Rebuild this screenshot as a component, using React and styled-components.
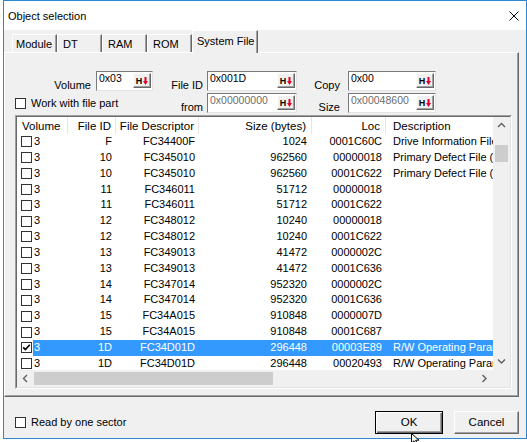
import React from 'react';
import styled, { createGlobalStyle } from 'styled-components';

const GlobalStyle = createGlobalStyle`
  html, body {
    margin: 0;
    padding: 0;
    background: #ffffff;
  }
  body {
    font-family: "Liberation Sans", Arial, sans-serif;
    font-size: 11px;
    color: #000000;
  }
`;

const Screen = styled.div`
  position: relative;
  width: 527px;
  height: 442px;
  overflow: hidden;
`;

const Dialog = styled.div`
  box-sizing: border-box;
  width: 524px;
  height: 439px;
  margin-left: 3px;
  border: 1px solid #2b87d3;
  background: #f0f0f0;
  display: flex;
  flex-direction: column;
`;

const TitleBar = styled.div`
  height: 29px;
  flex: none;
  background: #ffffff;
  display: flex;
  align-items: center;
  justify-content: space-between;
  padding: 0 7px 0 4px;
  font-size: 11px;
`;

const TabStrip = styled.div`
  position: relative;
  z-index: 1;
  height: 22px;
  flex: none;
  display: flex;
  align-items: flex-end;
  padding-left: 8px;
`;

const Tab = styled.div`
  box-sizing: border-box;
  width: ${(p) => p.$width}px;
  height: ${(p) => (p.$active ? 23 : 18)}px;
  margin-bottom: ${(p) => (p.$active ? -1 : 0)}px;
  padding-left: ${(p) => p.$pad}px;
  padding-bottom: ${(p) => (p.$active ? 2 : 0)}px;
  display: flex;
  align-items: center;
  background: #f0f0f0;
  border-top: 1px solid #ffffff;
  border-left: 1px solid #ffffff;
  border-right: 1px solid #696969;
  box-shadow: inset -1px 0 0 #a0a0a0;
  font-size: 11px;
  white-space: nowrap;
`;

const TabPanel = styled.div`
  box-sizing: border-box;
  width: 515px;
  height: 345px;
  flex: none;
  border: 1px solid;
  border-color: #ffffff #696969 #696969 #ffffff;
  box-shadow: inset -1px -1px 0 #a0a0a0;
  padding: 18px 0 0 10px;
  display: flex;
  flex-direction: column;
  gap: 2px;
`;

const FieldRow = styled.div`
  display: flex;
  align-items: flex-end;
  height: 20px;
`;

const Label = styled.div`
  box-sizing: border-box;
  width: ${(p) => p.$width}px;
  padding-right: ${(p) => p.$pad}px;
  text-align: right;
  line-height: 12px;
  white-space: nowrap;
`;

const Edit = styled.div`
  box-sizing: border-box;
  width: ${(p) => p.$width}px;
  height: 20px;
  background: #ffffff;
  border: 1px solid;
  border-color: #7a7a7a #e3e3e3 #e3e3e3 #7a7a7a;
  padding: 0 1px 0 2px;
  display: flex;
  justify-content: space-between;
  font-size: 10.5px;
  color: ${(p) => (p.$disabled ? '#6d6d6d' : '#000000')};
`;

const EditText = styled.span`
  line-height: 11px;
  margin-top: 1px;
`;

const HexButton = styled.div`
  box-sizing: border-box;
  width: 18px;
  height: 15px;
  margin-top: 1px;
  background: #f0f0f0;
  border: 1px solid;
  border-color: #ffffff #696969 #696969 #ffffff;
  box-shadow: inset -1px -1px 0 #a0a0a0;
  display: flex;
  align-items: center;
  justify-content: center;
  gap: 1px;
  font-size: 9px;
  font-weight: bold;
  color: #000000;
`;

const CheckLine = styled.label`
  box-sizing: border-box;
  width: ${(p) => (p.$width ? `${p.$width}px` : 'auto')};
  display: flex;
  align-items: center;
  gap: 5px;
  height: 20px;
  white-space: nowrap;
`;

const Box = styled.span`
  box-sizing: border-box;
  width: 11px;
  height: 11px;
  flex: none;
  border: 1px solid #333333;
  background: #ffffff;
  display: inline-flex;
  align-items: center;
  justify-content: center;
`;

const ListFrame = styled.div`
  box-sizing: border-box;
  width: 497px;
  height: 274px;
  border: 1px solid;
  border-color: #a0a0a0 #ffffff #ffffff #a0a0a0;
`;

const ListInner = styled.div`
  box-sizing: border-box;
  height: 100%;
  border: 1px solid;
  border-color: #696969 #e3e3e3 #e3e3e3 #696969;
  background: #ffffff;
  display: grid;
  grid-template-columns: 476px 17px;
  grid-template-rows: 253px 17px;
`;

const ListBody = styled.div`
  overflow: hidden;
`;

const HeaderRow = styled.div`
  display: grid;
  grid-template-columns: 51px 48px 83px 113px 74px 160px;
  height: 17px;
  background: #ffffff;
`;

const HeaderCell = styled.div`
  box-sizing: border-box;
  display: flex;
  align-items: center;
  justify-content: ${(p) => (p.$right ? 'flex-end' : 'flex-start')};
  padding: ${(p) => (p.$right ? `0 ${p.$pad}px 0 0` : `0 0 0 ${p.$pad}px`)};
  border-right: 1px solid #e5e5e5;
  font-size: 11.5px;
  white-space: nowrap;
`;

const Row = styled.div`
  display: grid;
  grid-template-columns: 16px 35px 48px 83px 113px 74px 160px;
  height: 15.85px;
  line-height: 15.85px;
`;

const CheckCell = styled.div`
  display: flex;
  align-items: center;
  padding-left: 4px;
`;

const Cell = styled.div`
  box-sizing: border-box;
  white-space: nowrap;
  overflow: hidden;
  text-align: ${(p) => (p.$right ? 'right' : 'left')};
  padding: ${(p) => (p.$right ? `0 ${p.$pad}px 0 0` : `0 0 0 ${p.$pad}px`)};
  background: ${(p) => (p.$selected ? '#3399ff' : 'transparent')};
  color: ${(p) => (p.$selected ? '#ffffff' : '#000000')};
`;

const VScroll = styled.div`
  background: #f0f0f0;
  display: flex;
  flex-direction: column;
`;

const HScroll = styled.div`
  background: #f0f0f0;
  display: flex;
`;

const Corner = styled.div`
  background: #f0f0f0;
`;

const Arrow = styled.div`
  width: 17px;
  height: 17px;
  flex: none;
  display: flex;
  align-items: center;
  justify-content: center;
`;

const VTrack = styled.div`
  flex: 1;
  display: flex;
  flex-direction: column;
  align-items: center;
`;

const VThumb = styled.div`
  width: 13px;
  height: 17px;
  margin-top: 11px;
  background: #cdcdcd;
`;

const HTrack = styled.div`
  flex: 1;
  display: flex;
  align-items: center;
`;

const HThumb = styled.div`
  width: 239px;
  height: 13px;
  background: #cdcdcd;
`;

const Footer = styled.div`
  flex: 1;
  display: flex;
  align-items: center;
  padding: 9px 7px 0 11px;
`;

const ButtonGroup = styled.div`
  margin-left: auto;
  display: flex;
  gap: 11px;
`;

const Button = styled.button`
  box-sizing: border-box;
  width: ${(p) => p.$width}px;
  height: 23px;
  padding: 0;
  font-family: inherit;
  font-size: 11.5px;
  color: #000000;
  background: #f0f0f0;
  border: 1px solid;
  border-color: ${(p) => (p.$default ? '#000000' : '#ffffff #696969 #696969 #ffffff')};
  box-shadow: ${(p) =>
    p.$default
      ? 'inset 1px 1px 0 #ffffff, inset -1px -1px 0 #696969, inset -2px -2px 0 #a0a0a0'
      : 'inset -1px -1px 0 #a0a0a0'};
`;

const Cursor = styled.svg`
  position: absolute;
  left: 411px;
  top: 433px;
`;

const rows = [
  ['3', 'F', 'FC34400F', '1024', '0001C60C', 'Drive Information File'],
  ['3', '10', 'FC345010', '962560', '00000018', 'Primary Defect File (P-List)'],
  ['3', '10', 'FC345010', '962560', '0001C622', 'Primary Defect File (P-List)'],
  ['3', '11', 'FC346011', '51712', '00000018', ''],
  ['3', '11', 'FC346011', '51712', '0001C622', ''],
  ['3', '12', 'FC348012', '10240', '00000018', ''],
  ['3', '12', 'FC348012', '10240', '0001C622', ''],
  ['3', '13', 'FC349013', '41472', '0000002C', ''],
  ['3', '13', 'FC349013', '41472', '0001C636', ''],
  ['3', '14', 'FC347014', '952320', '0000002C', ''],
  ['3', '14', 'FC347014', '952320', '0001C636', ''],
  ['3', '15', 'FC34A015', '910848', '0000007D', ''],
  ['3', '15', 'FC34A015', '910848', '0001C687', ''],
  ['3', '1D', 'FC34D01D', '296448', '00003E89', 'R/W Operating Parameters', true],
  ['3', '1D', 'FC34D01D', '296448', '00020493', 'R/W Operating Parameters'],
];

const Chevron = ({ dir }) => {
  const pts = {
    up: '1,5 4.5,1.5 8,5',
    down: '1,1.5 4.5,5 8,1.5',
    left: '5,1 1.5,4.5 5,8',
    right: '1.5,1 5,4.5 1.5,8',
  }[dir];
  const vertical = dir === 'up' || dir === 'down';
  return (
    <svg width={vertical ? 9 : 7} height={vertical ? 7 : 9} viewBox={vertical ? '0 0 9 7' : '0 0 7 9'}>
      <polyline points={pts} fill="none" stroke="#606060" strokeWidth="1.4" />
    </svg>
  );
};

const Check = ({ checked }) => (
  <Box>
    {checked && (
      <svg width="9" height="9" viewBox="0 0 9 9">
        <polyline points="1.2,4.4 3.4,6.6 7.8,1.8" fill="none" stroke="#000" strokeWidth="1.7" />
      </svg>
    )}
  </Box>
);

const HexInput = ({ value, width, disabled }) => (
  <Edit $width={width} $disabled={disabled}>
    <EditText>{value}</EditText>
    <HexButton>
      H
      <svg width="5" height="8" viewBox="0 0 5 8">
        <rect x="1.5" y="0" width="2" height="4" fill="#e4002b" />
        <polygon points="0,4 5,4 2.5,8" fill="#e4002b" />
      </svg>
    </HexButton>
  </Edit>
);

const App = () => (
  <Screen>
    <GlobalStyle />
    <Dialog>
      <TitleBar>
        <span>Object selection</span>
        <svg width="10" height="10" viewBox="0 0 10 10">
          <path d="M0.5 0.5 L9.5 9.5 M9.5 0.5 L0.5 9.5" stroke="#000" strokeWidth="1" />
        </svg>
      </TitleBar>

      <TabStrip>
        <Tab $width={45} $pad={3}>Module</Tab>
        <Tab $width={45} $pad={5}>DT</Tab>
        <Tab $width={45} $pad={5}>RAM</Tab>
        <Tab $width={45} $pad={5}>ROM</Tab>
        <Tab $width={66} $pad={4} $active>System File</Tab>
      </TabStrip>

      <TabPanel>
        <FieldRow>
          <Label $width={81} $pad={5}>Volume</Label>
          <HexInput value="0x03" width={57} />
          <Label $width={54} $pad={4}>File ID</Label>
          <HexInput value="0x001D" width={90} />
          <Label $width={51} $pad={8}>Copy</Label>
          <HexInput value="0x00" width={88} />
        </FieldRow>
        <FieldRow>
          <CheckLine $width={138}>
            <Check />
            Work with file part
          </CheckLine>
          <Label $width={54} $pad={4}>from</Label>
          <HexInput value="0x00000000" width={90} disabled />
          <Label $width={51} $pad={8}>Size</Label>
          <HexInput value="0x00048600" width={88} disabled />
        </FieldRow>

        <ListFrame>
          <ListInner>
            <ListBody>
              <HeaderRow>
                <HeaderCell $pad={5}>Volume</HeaderCell>
                <HeaderCell $right $pad={4}>File ID</HeaderCell>
                <HeaderCell $right $pad={4}>File Descriptor</HeaderCell>
                <HeaderCell $right $pad={5}>Size (bytes)</HeaderCell>
                <HeaderCell $right $pad={5}>Loc</HeaderCell>
                <HeaderCell $pad={7}>Description</HeaderCell>
              </HeaderRow>
              {rows.map(([vol, id, desc, size, loc, text, sel], i) => (
                <Row key={i}>
                  <CheckCell>
                    <Check checked={sel} />
                  </CheckCell>
                  <Cell $pad={1} $selected={sel}>{vol}</Cell>
                  <Cell $right $pad={4} $selected={sel}>{id}</Cell>
                  <Cell $right $pad={4} $selected={sel}>{desc}</Cell>
                  <Cell $right $pad={5} $selected={sel}>{size}</Cell>
                  <Cell $right $pad={4} $selected={sel}>{loc}</Cell>
                  <Cell $pad={7} $selected={sel}>{text}</Cell>
                </Row>
              ))}
            </ListBody>
            <VScroll>
              <Arrow><Chevron dir="up" /></Arrow>
              <VTrack>
                <VThumb />
              </VTrack>
              <Arrow><Chevron dir="down" /></Arrow>
            </VScroll>
            <HScroll>
              <Arrow><Chevron dir="left" /></Arrow>
              <HTrack>
                <HThumb />
              </HTrack>
              <Arrow><Chevron dir="right" /></Arrow>
            </HScroll>
            <Corner />
          </ListInner>
        </ListFrame>
      </TabPanel>

      <Footer>
        <CheckLine>
          <Check />
          Read by one sector
        </CheckLine>
        <ButtonGroup>
          <Button $width={68} $default>OK</Button>
          <Button $width={65}>Cancel</Button>
        </ButtonGroup>
      </Footer>
    </Dialog>
    <Cursor width="9" height="12" viewBox="0 0 9 12">
      <polygon points="0.5,0.5 0.5,10 3,7.8 5,11.5 6.5,10.8 4.6,7.2 8,7.2" fill="#fff" stroke="#000" strokeWidth="1" />
    </Cursor>
  </Screen>
);

export default App;
